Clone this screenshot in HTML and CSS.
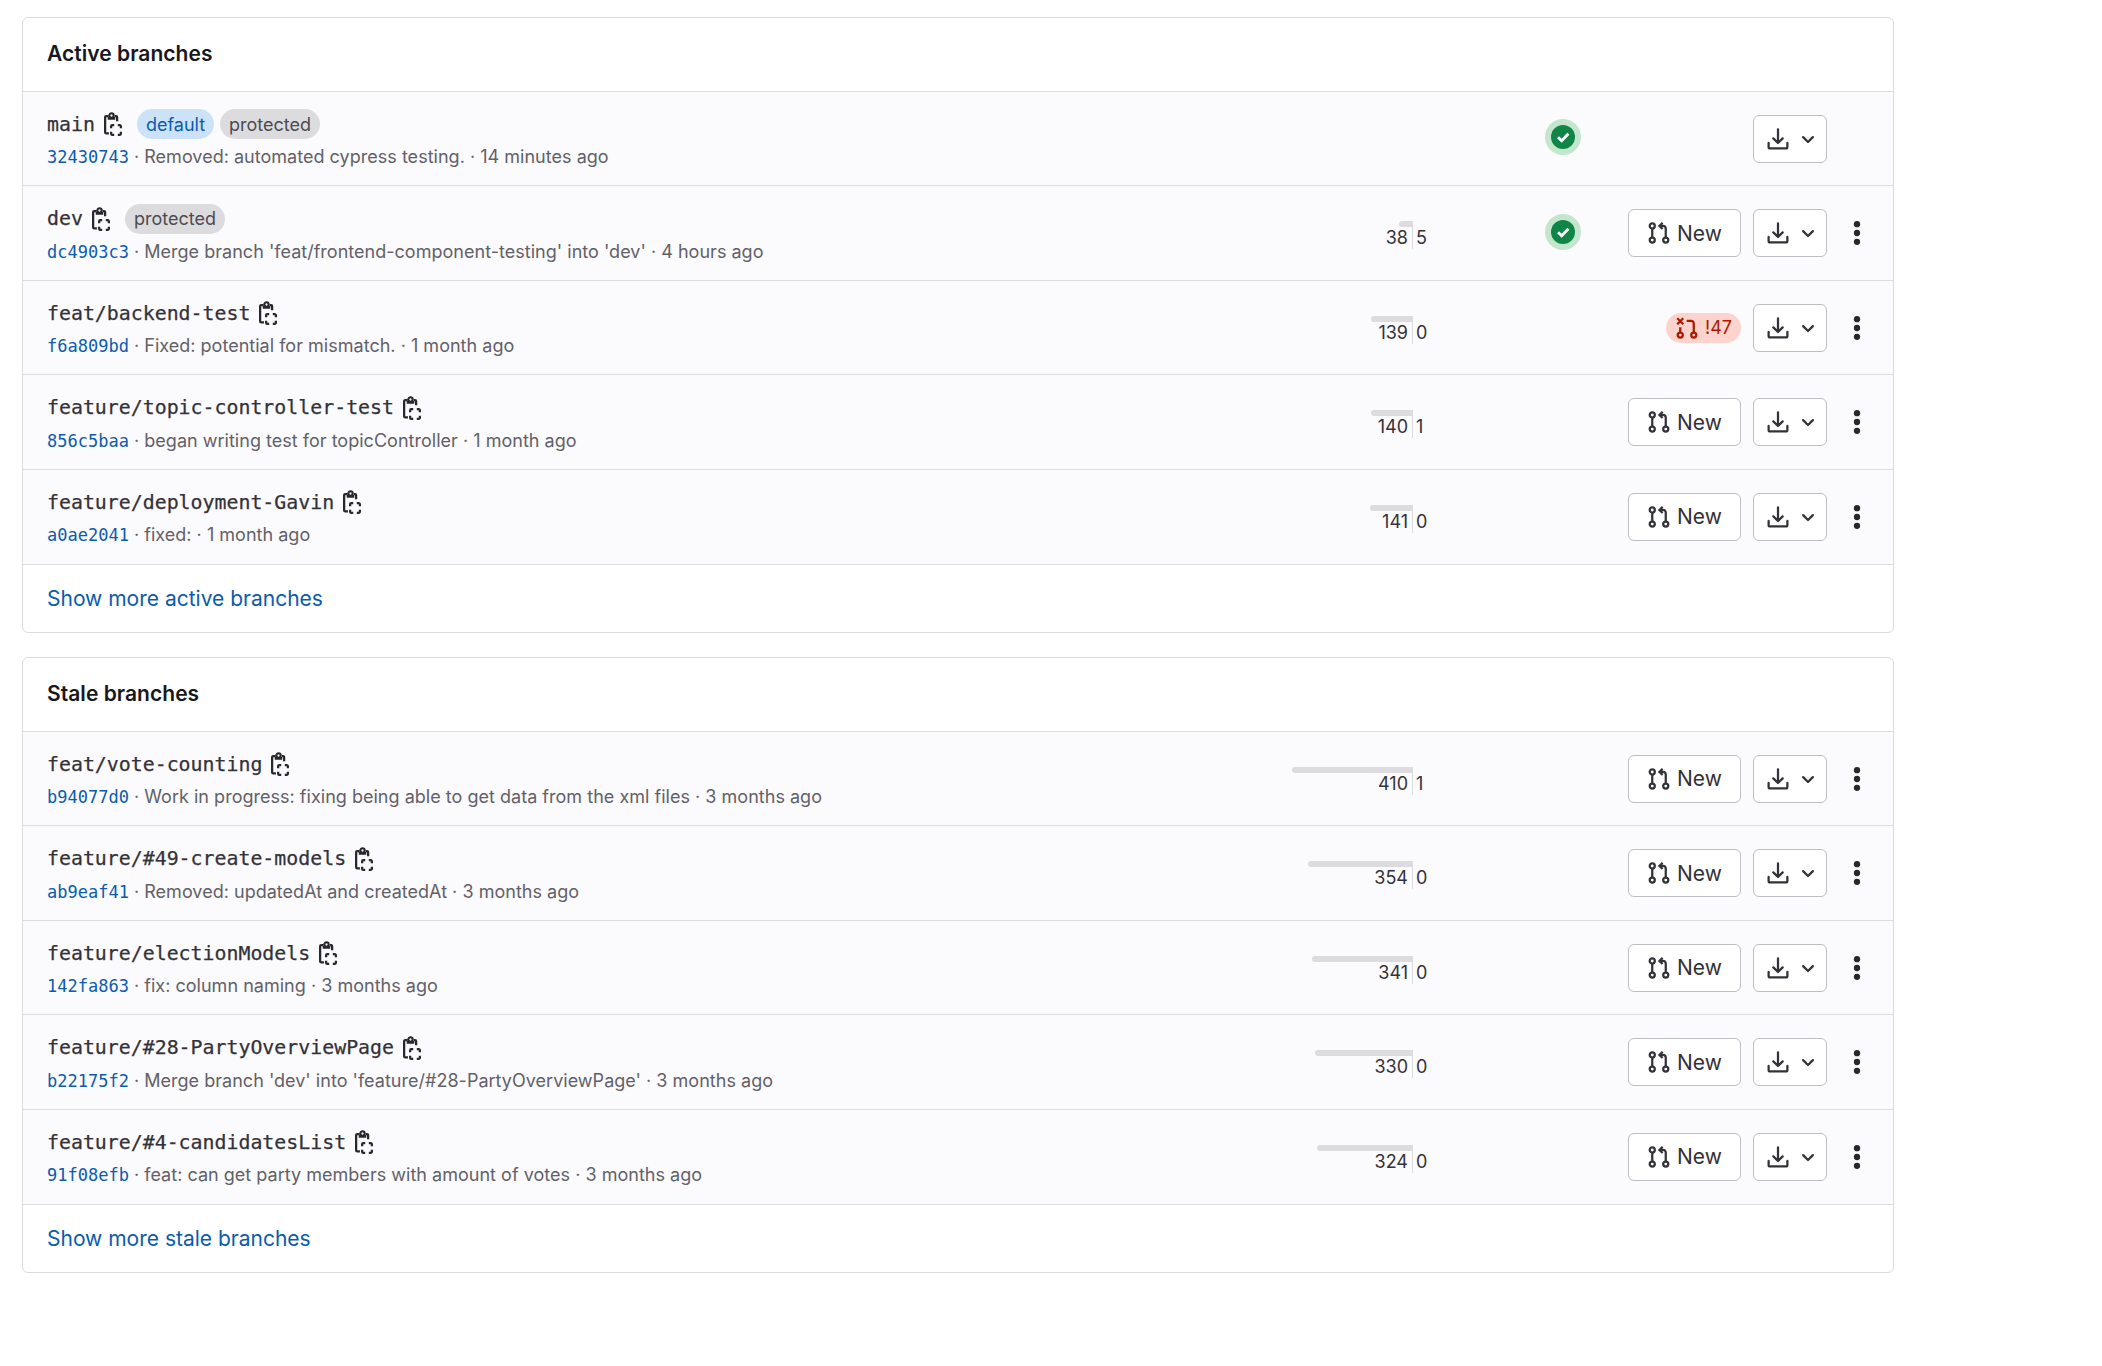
FILE: index.html
```html
<!DOCTYPE html>
<html lang="en">
<head>
<meta charset="utf-8">
<title>Branches</title>
<link rel="stylesheet" href="styles.css">
</head>
<body>
<svg class="sprite" aria-hidden="true">
  <symbol id="copy" viewBox="0 0 16 16"><g fill="none" stroke="currentColor" stroke-width="1.5"><path d="M5.3 14.25H3.5a.75.75 0 0 1-.75-.75v-10A.75.75 0 0 1 3.5 2.75H5M9.2 2.75h.8a.75.75 0 0 1 .75.75v2.6"/><path d="M4.5 5.1h5V3.4H8.6a1.6 1.6 0 1 0-3.2 0H4.5z" stroke="none" fill="currentColor"/><circle cx="7" cy="2.3" r="1.4"/><circle cx="7" cy="2.4" r=".75" stroke="none" fill="#fbfafd"/><path d="M6.75 10.9V9.5a.75.75 0 0 1 .75-.75h1.3M11.2 8.75h1.3a.75.75 0 0 1 .75.75v1.4M13.25 13.1v1.4a.75.75 0 0 1-.75.75h-1.3M8.8 15.25H7.5a.75.75 0 0 1-.75-.75v-1.4"/></g></symbol>
  <symbol id="merge" viewBox="0 0 16 16"><g fill="none" stroke="currentColor" stroke-width="1.5"><circle cx="3.5" cy="3.3" r="1.7"/><circle cx="3.5" cy="12.7" r="1.7"/><circle cx="12.5" cy="12.7" r="1.7"/><path d="M3.5 5v6M12.5 11V5a1.75 1.75 0 0 0-1.75-1.75H8.6M10.4 1.2 8.3 3.25l2.1 2.05"/></g></symbol>
  <symbol id="closed" viewBox="0 0 16 16"><g fill="none" stroke="currentColor" stroke-width="1.5"><circle cx="3.5" cy="12.7" r="1.7"/><circle cx="12.5" cy="12.7" r="1.7"/><path d="M3.5 7.5V11M7.8 3.25h2.95A1.75 1.75 0 0 1 12.5 5v6M1.5 1.5l4 4M5.5 1.5l-4 4"/></g></symbol>
  <symbol id="download" viewBox="0 0 16 16"><path fill="none" stroke="currentColor" stroke-width="1.5" stroke-linecap="round" stroke-linejoin="round" d="M8 1.5v9.2M4.9 7.6 8 10.7l3.1-3.1M1.75 10.6v2.65a1 1 0 0 0 1 1h10.5a1 1 0 0 0 1-1V10.6"/></symbol>
  <symbol id="chevron" viewBox="0 0 16 16"><path fill="none" stroke="currentColor" stroke-width="1.5" stroke-linecap="round" stroke-linejoin="round" d="m4.75 6.75 3.25 3.25 3.25-3.25"/></symbol>
  <symbol id="kebab" viewBox="0 0 16 16"><g fill="currentColor"><circle cx="8" cy="2.1" r="2.1"/><circle cx="8" cy="8" r="2.1"/><circle cx="8" cy="13.9" r="2.1"/></g></symbol>
  <symbol id="passed" viewBox="0 0 24 24"><circle cx="12" cy="12" r="12" fill="#c3e6cd"/><circle cx="12" cy="12" r="8" fill="#108548"/><path fill="none" stroke="#fff" stroke-width="1.9" d="m8.7 12.2 2.4 2.3 4.5-4.6"/></symbol>
</svg>
<main class="page" id="page"></main>
<script src="script.js"></script>
</body>
</html>
```
FILE: styles.css
```css
* { box-sizing: border-box; }
body { margin: 0; background: #fff; color: #333238; font-family: Inter, sans-serif; font-size: 21px; }
a { color: #0b5cad; text-decoration: none; }
.sprite { display: none; }
.page { display: flex; flex-direction: column; gap: 24px; width: 1872px; margin: 17px 0 0 22px; }
.card { display: flex; flex-direction: column; height: 616px; border: 1px solid #dcdcde; border-radius: 6px; background: #fff; overflow: hidden; }
.card-title { height: 72.8px; margin: 0; padding: 0 24px; font-size: 21px; font-weight: 600; line-height: 72px; letter-spacing: 0.04px; color: #18171d; }
.rows { margin: 0; padding: 0; list-style: none; }
.row { display: grid; grid-template-columns: 1210px 330px 1fr; height: 94.55px; padding: 0 18px 0 24px; align-items: center; border-top: 1px solid #dcdcde; background: #fbfafd; }
.more { flex: 1; padding: 0 24px; border-top: 1px solid #dcdcde; line-height: 67px; }
.info { display: flex; flex-direction: column; gap: 3px; padding-top: 4px; }
.name-line { display: flex; align-items: center; height: 30px; }
.name { font-family: "DejaVu Sans Mono", monospace; font-size: 19.9px; letter-spacing: -0.01px; -webkit-text-stroke: 0.25px currentColor; }
.copy { width: 24px; height: 24px; margin: 0 9px 0 6px; color: #28272d; }
.badge { display: flex; align-items: center; height: 30px; padding: 0 9px; border-radius: 15px; font-size: 18px; }
.badge-info { margin: 0 6px 0 3px; background: #cbe2f9; color: #0b5cad; }
.badge-muted { background: #dcdcde; color: #4c4b51; }
.only { margin-left: 3px; }
.commit { font-size: 18px; line-height: 30px; letter-spacing: 0.02px; color: #626168; white-space: pre; }
.sha { font-family: "DejaVu Sans Mono", monospace; font-size: 17px; letter-spacing: 0; }
.stats { display: flex; align-items: center; justify-content: space-between; }
.graph { display: grid; grid-template-columns: 155px 1px auto; height: 28px; width: 220px; margin-top: 4px; font-size: 18px; line-height: 22px; }
.behind { display: flex; flex-direction: column; align-items: flex-end; }
.bar { height: 6px; border-radius: 3px 0 0 3px; background: #dcdcde; }
.behind span { padding-right: 4px; }
.axis { background: #dcdcde; }
.ahead { padding: 6px 0 0 3px; }
.ci { width: 36px; height: 36px; margin: 0 6px 3px 0; }
.actions { display: flex; align-items: center; justify-content: flex-end; gap: 12px; }
.btn { display: flex; align-items: center; height: 48px; border: 1px solid #bfbfc3; border-radius: 6px; background: #fff; }
.btn svg { width: 24px; height: 24px; }
.btn-new { width: 113px; padding: 0 18px; gap: 6px; }
.btn-download { width: 74px; padding-left: 12px; gap: 6px; }
.mr { display: flex; align-items: center; gap: 6px; height: 30px; padding: 0 9px; border-radius: 15px; background: #fdd4cd; color: #ae1800; font-size: 18px; }
.mr svg { width: 24px; height: 24px; }
.kebab { display: flex; justify-content: center; width: 36px; color: #28272d; }
.kebab svg { width: 24px; height: 24px; }
```
FILE: script.js
```js
const cards = [
  { title: 'Active branches', more: 'Show more active branches', rows: [
    { name: 'main', sha: '32430743', msg: 'Removed: automated cypress testing.', time: '14 minutes ago', isDefault: true, isProtected: true, ci: true },
    { name: 'dev', sha: 'dc4903c3', msg: "Merge branch 'feat/frontend-component-testing' into 'dev'", time: '4 hours ago', isProtected: true, ci: true, behind: 38, ahead: 5, bar: 13 },
    { name: 'feat/backend-test', sha: 'f6a809bd', msg: 'Fixed: potential for mismatch.', time: '1 month ago', behind: 139, ahead: 0, bar: 41 },
    { name: 'feature/topic-controller-test', sha: '856c5baa', msg: 'began writing test for topicController', time: '1 month ago', behind: 140, ahead: 1, bar: 41 },
    { name: 'feature/deployment-Gavin', sha: 'a0ae2041', msg: 'fixed:', time: '1 month ago', behind: 141, ahead: 0, bar: 42 }
  ] },
  { title: 'Stale branches', more: 'Show more stale branches', rows: [
    { name: 'feat/vote-counting', sha: 'b94077d0', msg: 'Work in progress: fixing being able to get data from the xml files', time: '3 months ago', behind: 410, ahead: 1, bar: 120 },
    { name: 'feature/#49-create-models', sha: 'ab9eaf41', msg: 'Removed: updatedAt and createdAt', time: '3 months ago', behind: 354, ahead: 0, bar: 104 },
    { name: 'feature/electionModels', sha: '142fa863', msg: 'fix: column naming', time: '3 months ago', behind: 341, ahead: 0, bar: 100 },
    { name: 'feature/#28-PartyOverviewPage', sha: 'b22175f2', msg: "Merge branch 'dev' into 'feature/#28-PartyOverviewPage'", time: '3 months ago', behind: 330, ahead: 0, bar: 97 },
    { name: 'feature/#4-candidatesList', sha: '91f08efb', msg: 'feat: can get party members with amount of votes', time: '3 months ago', behind: 324, ahead: 0, bar: 95 }
  ] }
];
cards[0].rows[2].mr = '!47';

const icon = (id, cls = '') => `<svg class="${cls}"><use href="#${id}"/></svg>`;

const graph = r => r.behind === undefined ? '<div></div>' :
  `<div class="graph"><div class="behind"><div class="bar" style="width:${r.bar}px"></div><span>${r.behind}</span></div><div class="axis"></div><div class="ahead">${r.ahead}</div></div>`;

const action = r => r.isDefault ? '' : r.mr
  ? `<a class="mr">${icon('closed')}${r.mr}</a>`
  : `<div class="btn btn-new">${icon('merge')}<span>New</span></div>`;

const row = r => `<li class="row">
  <div class="info">
    <div class="name-line"><span class="name">${r.name}</span>${icon('copy', 'copy')}${r.isDefault ? '<span class="badge badge-info">default</span>' : ''}${r.isProtected ? `<span class="badge badge-muted${r.isDefault ? '' : ' only'}">protected</span>` : ''}</div>
    <div class="commit"><a class="sha">${r.sha}</a> · ${r.msg} · ${r.time}</div>
  </div>
  <div class="stats">${graph(r)}${r.ci ? icon('passed', 'ci') : ''}</div>
  <div class="actions">${action(r)}<div class="btn btn-download">${icon('download')}${icon('chevron')}</div><div class="kebab">${r.isDefault ? '' : icon('kebab')}</div></div>
</li>`;

document.getElementById('page').innerHTML = cards.map(c => `<section class="card">
  <h2 class="card-title">${c.title}</h2>
  <ul class="rows">${c.rows.map(row).join('')}</ul>
  <div class="more"><a>${c.more}</a></div>
</section>`).join('');
```
